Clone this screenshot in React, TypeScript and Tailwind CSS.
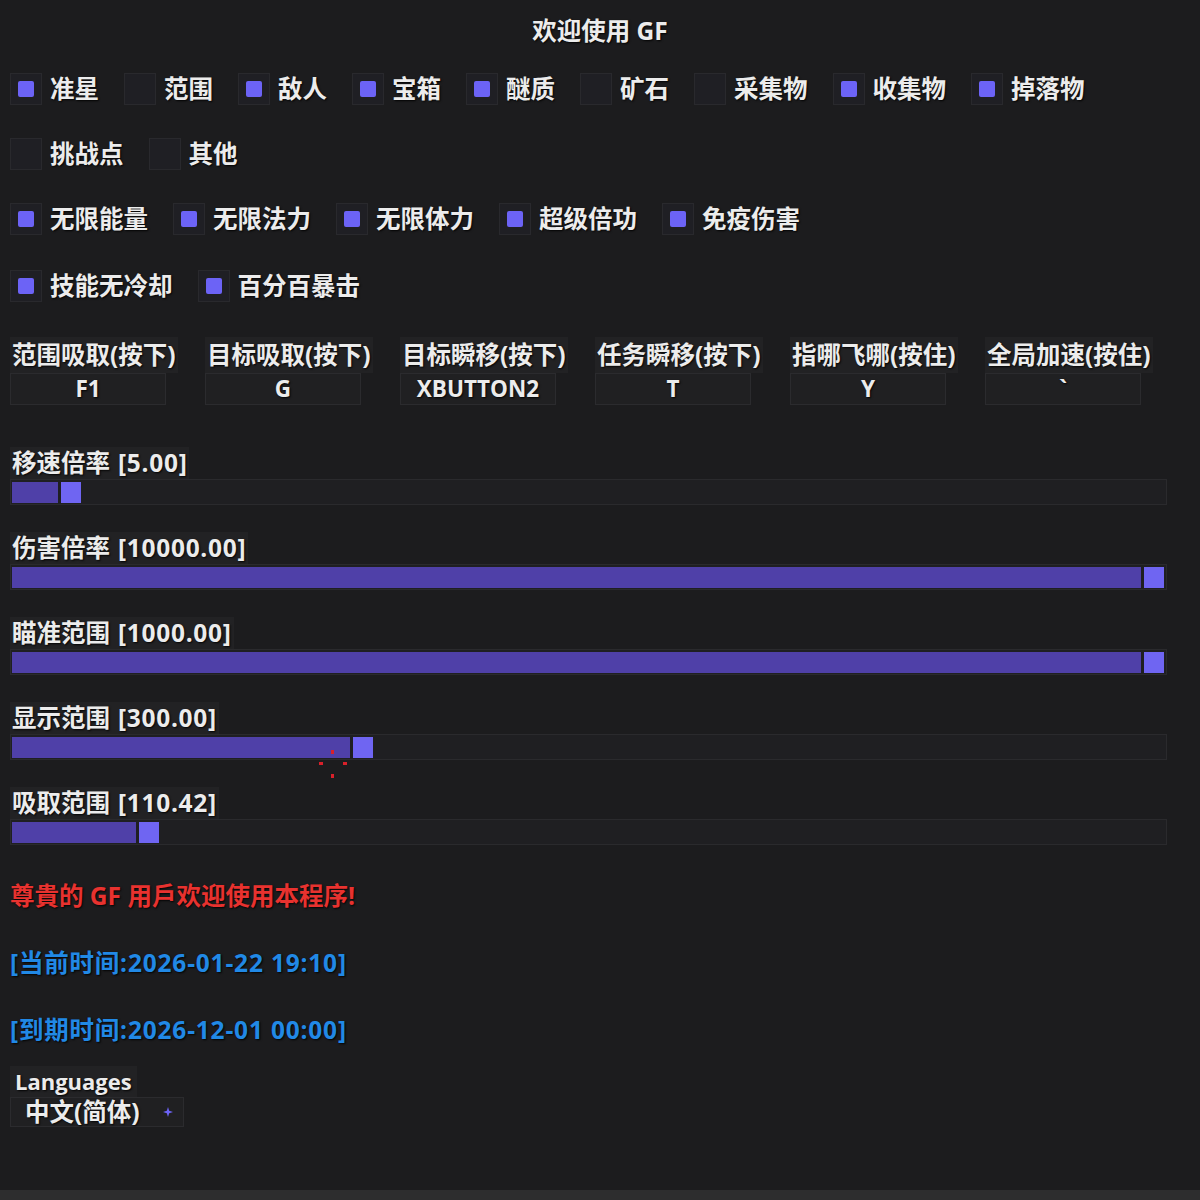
import React from "react";

const font = "font-['Open_Sans','Noto_Sans_CJK_SC',sans-serif] font-bold";
const shadow = "[text-shadow:1px_1px_2px_rgba(0,0,0,0.9)]";

interface ToggleProps {
  label: string;
  on?: boolean;
}

// imgui style checkbox: dark frame, filled square when ticked
const Toggle: React.FC<ToggleProps> = ({ label, on = false }) => (
  <div className="flex items-center gap-2 h-8">
    <div className="w-8 h-8 bg-[#1f1f24] border border-[#29292d] flex items-center justify-center">
      {on && <div className="w-4 h-4 bg-[#6c63f6] rounded-[2px]" />}
    </div>
    <span className={`text-[24.5px] leading-none text-[#ececec] ${shadow}`}>{label}</span>
  </div>
);

const HotKey: React.FC<{ title: string; value: string }> = ({ title, value }) => (
  <div className="w-[195px] flex flex-col items-start">
    <div className={`h-9 flex items-center px-[2px] bg-[#222224] text-[24.5px] text-[#ececec] ${shadow}`}>
      {title}
    </div>
    <div className={`w-[156px] h-8 bg-[#202022] border border-[#2b2b2e] flex items-center justify-center text-[22.5px] text-[#ececec] ${shadow}`}>
      {value}
    </div>
  </div>
);

interface SliderProps {
  label: string;
  value: string;
  fill: number;
}

const Slider: React.FC<SliderProps> = ({ label, value, fill }) => (
  <div className="flex flex-col items-start">
    <div className={`h-8 flex items-center px-[2px] bg-[#222224] text-[24.5px] text-[#ececec] ${shadow}`}>
      <span>{label}</span>
      <span className="ml-2 tracking-[0.7px]">[{value}]</span>
    </div>
    <div className="w-[1157px] h-[26px] bg-[#1f1f22] border border-[#2a2a2d] flex items-center gap-[3px] px-px">
      <div className="h-[21px] bg-[#4f40a8]" style={{ width: fill }} />
      <div className="w-5 h-[21px] bg-[#6f65f2]" />
    </div>
  </div>
);

export default function App() {
  return (
    <div className={`relative w-[1200px] h-[1200px] bg-[#1c1c1e] overflow-hidden flex flex-col px-[10px] ${font}`}>
      <div className={`h-[62px] flex items-center justify-center text-[24.5px] text-[#ececec] ${shadow}`}>
        欢迎使用 GF
      </div>

      <div className="mt-[11px] flex flex-col gap-[33px]">
        <div className="flex items-center gap-x-[25px]">
          <Toggle label="准星" on />
          <Toggle label="范围" />
          <Toggle label="敌人" on />
          <Toggle label="宝箱" on />
          <Toggle label="醚质" on />
          <Toggle label="矿石" />
          <Toggle label="采集物" />
          <Toggle label="收集物" on />
          <Toggle label="掉落物" on />
        </div>
        <div className="flex items-center gap-x-[25px]">
          <Toggle label="挑战点" />
          <Toggle label="其他" />
        </div>
        <div className="flex items-center gap-x-[25px]">
          <Toggle label="无限能量" on />
          <Toggle label="无限法力" on />
          <Toggle label="无限体力" on />
          <Toggle label="超级倍功" on />
          <Toggle label="免疫伤害" on />
        </div>
        <div className="mt-[2px] flex items-center gap-x-[25px]">
          <Toggle label="技能无冷却" on />
          <Toggle label="百分百暴击" on />
        </div>
      </div>

      <div className="mt-[35px] flex">
        <HotKey title="范围吸取(按下)" value="F1" />
        <HotKey title="目标吸取(按下)" value="G" />
        <HotKey title="目标瞬移(按下)" value="XBUTTON2" />
        <HotKey title="任务瞬移(按下)" value="T" />
        <HotKey title="指哪飞哪(按住)" value="Y" />
        <HotKey title="全局加速(按住)" value="`" />
      </div>

      <div className="mt-[42px] flex flex-col gap-[27px]">
        <Slider label="移速倍率" value="5.00" fill={46} />
        <Slider label="伤害倍率" value="10000.00" fill={1129} />
        <Slider label="瞄准范围" value="1000.00" fill={1129} />
        <Slider label="显示范围" value="300.00" fill={338} />
        <Slider label="吸取范围" value="110.42" fill={124} />
      </div>

      <div className={`mt-[35px] h-8 flex items-center text-[24.5px] text-[#e8322f] ${shadow}`}>
        尊貴的 GF 用戶欢迎使用本程序!
      </div>
      <div className={`mt-[35px] h-8 flex items-center text-[24.5px] tracking-[0.8px] text-[#2189e6] ${shadow}`}>
        [当前时间:2026-01-22 19:10]
      </div>
      <div className={`mt-[35px] h-8 flex items-center text-[24.5px] tracking-[0.8px] text-[#2189e6] ${shadow}`}>
        [到期时间:2026-12-01 00:00]
      </div>

      <div className="mt-[20px] flex flex-col items-start">
        <div className={`h-[31px] flex items-center px-[5px] bg-[#222224] text-[22px] text-[#ececec] ${shadow}`}>
          Languages
        </div>
        <div className="w-[174px] h-[30px] bg-[#202022] border border-[#2b2b2e] flex items-center justify-between pl-[14px] pr-[10px]">
          <span className={`text-[24.5px] text-[#ececec] ${shadow}`}>中文(简体)</span>
          <svg width="10" height="10" viewBox="0 0 10 10">
            <path d="M5 0 L6.2 3.8 L10 5 L6.2 6.2 L5 10 L3.8 6.2 L0 5 L3.8 3.8 Z" fill="#6c63f6" />
          </svg>
        </div>
      </div>

      {/* crosshair overlay drawn by the aim helper */}
      <div className="absolute left-[318px] top-[749px] w-[30px] h-[30px]">
        <div className="absolute left-[13px] top-[1px] w-[3px] h-[4px] bg-[#d8202a]" />
        <div className="absolute left-[13px] top-[25px] w-[3px] h-[4px] bg-[#d8202a]" />
        <div className="absolute left-[1px] top-[13px] w-[4px] h-[3px] bg-[#d8202a]" />
        <div className="absolute left-[25px] top-[13px] w-[4px] h-[3px] bg-[#d8202a]" />
      </div>

      <div className="absolute left-0 bottom-0 w-full h-[10px] bg-[#2d2d2e]" />
    </div>
  );
}
